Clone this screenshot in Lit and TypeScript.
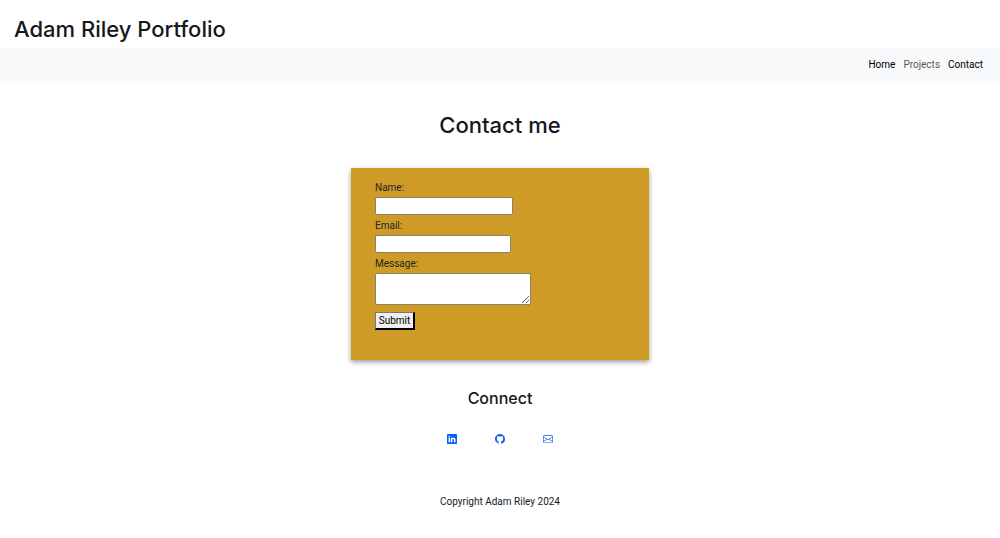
import { LitElement, html, css } from "lit";
import { customElement } from "lit/decorators.js";

@customElement("app-root")
export class AppRoot extends LitElement {
  static styles = css`
    :host {
      display: block;
      font: 10px/15px Roboto, "Liberation Sans", sans-serif;
      color: #212529;
      background: #fff;
    }
    * { box-sizing: border-box; }
    .title, .heading, .connect {
      margin: 0;
      font-family: Inter, "Liberation Sans", sans-serif;
      font-weight: 500;
      color: #15181b;
    }
    .title { font-size: 22px; line-height: 28px; padding: 15px 14px 5px; }
    .heading { font-size: 22px; line-height: 28px; }
    .connect { font-size: 16px; line-height: 20px; margin-top: 28px; }
    .nav {
      display: flex;
      justify-content: flex-end;
      gap: 8px;
      padding: 9px 17px;
      background: #f8f9fb;
    }
    .nav-link { color: #000; text-decoration: none; }
    .nav-link.muted { color: #595a5c; }
    .main { display: flex; flex-direction: column; align-items: center; padding-top: 30px; }
    .card {
      display: flex;
      flex-direction: column;
      align-items: flex-start;
      width: 298px;
      max-width: 100%;
      margin-top: 29px;
      padding: 12px 24px 30px;
      background: #ce9b26;
      border: 0;
      box-shadow: 0 2px 5px rgba(0, 0, 0, 0.4);
    }
    .field {
      display: block;
      height: 18px;
      margin: 2px 0 3px;
      padding: 1px 2px;
      border: 1px solid #8c7f66;
      border-radius: 2px;
      background: #fff;
      font: inherit;
    }
    .name { width: 138px; }
    .email { width: 136px; }
    .message { width: 156px; height: 32px; resize: both; }
    .submit {
      height: 18px;
      margin: 4px 0 0;
      padding: 0 2px;
      border: 2px outset #767676;
      border-color: #767676 #222 #222 #767676;
      border-width: 1px 2px 2px 1px;
      border-radius: 0;
      background: #efefef;
      color: #000;
      font: inherit;
      min-width: 40px;
    }
    .social { display: flex; gap: 38px; margin-top: 26px; }
    .social-link { display: block; color: #0d6efd; }
    .icon { display: block; width: 10px; height: 10px; fill: #0a62f5; }
    .footer { padding: 50px 0 30px; text-align: center; color: #15181b; }
  `;

  render() {
    return html`
      <header>
        <h1 class="title">Adam Riley Portfolio</h1>
        <nav class="nav">
          <a class="nav-link" href="#home">Home</a>
          <a class="nav-link muted" href="#projects">Projects</a>
          <a class="nav-link" href="#contact">Contact</a>
        </nav>
      </header>
      <main class="main">
        <h2 class="heading">Contact me</h2>
        <form class="card">
          <label for="name">Name:</label>
          <input class="field name" id="name" type="text" />
          <label for="email">Email:</label>
          <input class="field email" id="email" type="email" />
          <label for="message">Message:</label>
          <textarea class="field message" id="message"></textarea>
          <button class="submit" type="submit">Submit</button>
        </form>
        <h3 class="connect">Connect</h3>
        <div class="social">
          <a class="social-link" href="#linkedin" aria-label="LinkedIn">
            <svg class="icon" viewBox="0 0 16 16"><path d="M0 1.146C0 .513.526 0 1.175 0h13.65C15.474 0 16 .513 16 1.146v13.708c0 .633-.526 1.146-1.175 1.146H1.175C.526 16 0 15.487 0 14.854zm4.943 12.248V6.169H2.542v7.225zm-1.2-8.212c.837 0 1.358-.554 1.358-1.248-.015-.709-.52-1.248-1.342-1.248S2.4 3.226 2.4 3.934c0 .694.521 1.248 1.327 1.248zm4.908 8.212V9.359c0-.216.016-.432.08-.586.173-.431.568-.878 1.232-.878.869 0 1.216.662 1.216 1.634v3.865h2.401V9.25c0-2.22-1.184-3.252-2.764-3.252-1.274 0-1.845.7-2.165 1.193v.025h-.016l.016-.025V6.169h-2.4c.03.678 0 7.225 0 7.225z" /></svg>
          </a>
          <a class="social-link" href="#github" aria-label="GitHub">
            <svg class="icon" viewBox="0 0 16 16"><path d="M8 0C3.58 0 0 3.58 0 8c0 3.54 2.29 6.53 5.47 7.59.4.07.55-.17.55-.38 0-.19-.01-.82-.01-1.49-2.01.37-2.53-.49-2.69-.94-.09-.23-.48-.94-.82-1.13-.28-.15-.68-.52-.01-.53.63-.01 1.08.58 1.23.82.72 1.21 1.87.87 2.33.66.07-.52.28-.87.51-1.07-1.78-.2-3.64-.89-3.64-3.95 0-.87.31-1.59.82-2.15-.08-.2-.36-1.02.08-2.12 0 0 .67-.21 2.2.82.64-.18 1.32-.27 2-.27s1.36.09 2 .27c1.53-1.04 2.2-.82 2.2-.82.44 1.1.16 1.92.08 2.12.51.56.82 1.27.82 2.15 0 3.07-1.87 3.75-3.65 3.95.29.25.54.73.54 1.48 0 1.07-.01 1.93-.01 2.2 0 .21.15.46.55.38A8.01 8.01 0 0 0 16 8c0-4.42-3.58-8-8-8" /></svg>
          </a>
          <a class="social-link" href="#email" aria-label="Email">
            <svg class="icon" viewBox="0 0 16 16"><path d="M0 4a2 2 0 0 1 2-2h12a2 2 0 0 1 2 2v8a2 2 0 0 1-2 2H2a2 2 0 0 1-2-2zm2-1a1 1 0 0 0-1 1v.217l7 4.2 7-4.2V4a1 1 0 0 0-1-1zm13 2.383-4.708 2.825L15 11.105zm-.034 6.876-5.64-3.471L8 9.583l-1.326-.795-5.64 3.47A1 1 0 0 0 2 13h12a1 1 0 0 0 .966-.741M1 11.105l4.708-2.897L1 5.383z" /></svg>
          </a>
        </div>
      </main>
      <footer class="footer">Copyright Adam Riley 2024</footer>
    `;
  }
}
